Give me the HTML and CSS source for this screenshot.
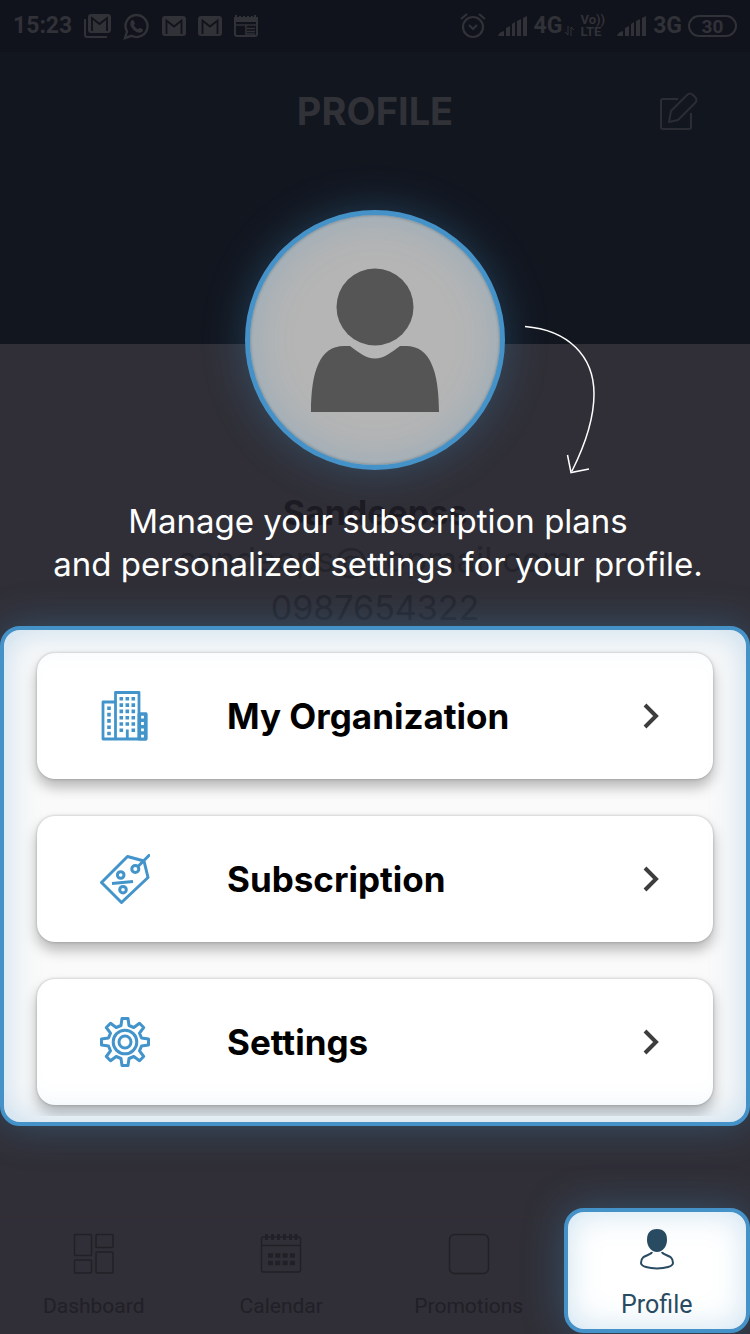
FILE: index.html
```html
<!DOCTYPE html>
<html lang="en">
<head>
<meta charset="utf-8">
<meta name="viewport" content="width=device-width, initial-scale=1">
<title>Profile</title>
<link rel="stylesheet" href="styles.css">
</head>
<body>
<header class="hero">
  <div class="status">
    <div class="status-left">
      <span class="clock">15:23</span>
      <svg width="27" height="24" viewBox="0 0 27 24" fill="none" stroke="currentColor" stroke-width="2"><path d="M1 5v16q0 2 2 2h20"/><rect x="5" y="1" width="21" height="17" rx="2" fill="currentColor"/><path d="M8 17V4l7.500 6L23 4v13" stroke="#10131b" stroke-width="1.800"/></svg>
      <svg width="27" height="27" viewBox="0 0 27 27" fill="none" stroke="currentColor" stroke-width="2.400"><path d="M2 25l2-6.500a11 11 0 1 1 4.500 4.300z"/><path d="M8.500 7.500q1.500-1 2.500.5l1 2.500-1.200 1.700q1.500 2.800 4.200 4l1.800-1.500 3 1.500q.7 3-3 3.500c-5 0-10-6-9.500-9.500q.3-2 1.200-2.700z" fill="currentColor" stroke="none"/></svg>
      <svg width="24" height="20" viewBox="0 0 24 20" fill="none" stroke="currentColor" stroke-width="2"><rect x="1" y="1" width="22" height="18" rx="2" fill="currentColor"/><path d="M4.500 18V4.500l7.500 6 7.500-6V18" stroke="#10131b" stroke-width="1.800"/></svg>
      <svg width="24" height="20" viewBox="0 0 24 20" fill="none" stroke="currentColor" stroke-width="2"><rect x="1" y="1" width="22" height="18" rx="2" fill="currentColor"/><path d="M4.500 18V4.500l7.500 6 7.500-6V18" stroke="#10131b" stroke-width="1.800"/></svg>
      <svg width="24" height="22" viewBox="0 0 24 22" fill="none" stroke="currentColor" stroke-width="2"><path d="M1 3h22v16q0 2-2 2H3q-2 0-2-2z"/><path d="M1 0h2v3h2V1h2v2h2V1h2v2h2V1h2v2h2V1h2v2h1V0h2v7H1z" fill="currentColor" stroke="none"/><path d="M1 10h22M12 10v11M13 13.500h8M13 16.500h8M13 19h8" stroke-width="1.600"/></svg>
    </div>
    <div class="status-right">
      <svg class="alarm" width="26" height="26" viewBox="0 0 26 26" fill="none" stroke="currentColor" stroke-width="2.200"><circle cx="13" cy="14" r="10"/><path d="M1 6l6-5M25 6l-6-5M9 12l4 4 4-4"/></svg>
      <svg width="30" height="22" viewBox="0 0 30 22" fill="currentColor"><path d="M0 21q1-4 6-5v5zM8 13l4-2v10H8zM14 9l3-2v14h-3zM19 6l4-2v17h-4zM25 3l4-2v20h-4z"/></svg>
      <span class="net net-data">4G<svg width="9" height="10" viewBox="0 0 9 10" fill="none" stroke="currentColor"><path d="M3 0v9L0 6M6 10V1l3 3"/></svg></span>
      <span class="volte"><span>Vo))</span><span>LTE</span></span>
      <svg width="30" height="22" viewBox="0 0 30 22" fill="currentColor"><path d="M0 21q1-4 6-5v5zM8 13l4-2v10H8zM14 9l3-2v14h-3zM19 6l4-2v17h-4zM25 3l4-2v20h-4z"/></svg>
      <span class="net">3G</span>
      <span class="battery">30</span>
    </div>
  </div>
  <div class="titlebar">
    <h1 class="title">PROFILE</h1>
    <button class="edit" type="button" aria-label="Edit profile"><svg width="40" height="40" viewBox="0 0 40 40" fill="none" stroke="currentColor" stroke-width="2" stroke-linejoin="round"><path d="M19 8H4q-2 0-2 2v26q0 2 2 2h26q2 0 2-2V22"/><path d="M10 31l2-11L28 4q3-3 6 0l2 2q3 3 0 6L19 29z"/></svg></button>
  </div>
</header>

<main class="main">
  <div class="avatar">
    <svg width="130" height="146" viewBox="310 266 130 146" fill="#555" aria-hidden="true"><circle cx="375" cy="306" r="38.500"/><path d="M311 411C311 370 320 345 344 345h6c8 6 16 12.500 25 12.500S392 351 400 345h6c24 0 33 25 33 66z"/></svg>
  </div>
  <svg class="pointer" width="72" height="150" viewBox="524 325 72 150" fill="none" stroke="#fff" stroke-width="1.500" aria-hidden="true"><path d="M525 326.500C568 330 594 356 594 394c0 26-9 51-22 77M567.500 455l3.500 17.500 18-3.500"/></svg>
  <section class="details">
    <h2 class="name">Sandeepss</h2>
    <p class="contact">sandeeps@yopmail.com</p>
    <p class="contact">0987654322</p>
    <p class="hint">Manage your subscription plans<br>and personalized settings for your profile.</p>
  </section>

  <section class="panel">
    <div class="cards">
      <a class="card" href="#organization">
        <svg class="card-icon" width="50" height="50" viewBox="0 0 50 50" fill="none" stroke="#4294cb" stroke-width="2.800" stroke-linejoin="round"><path d="M15.500 48V1.500h23.500V48M15.500 11H3v37h43V23h-7M27.300 48V38.500"/><path d="M39 23h7v25h-7z" fill="#4294cb"/><path d="M9 15.500V45" stroke-width="3.600" stroke-dasharray="3.600 2.700"/><path d="M21.300 6V41.500M27.300 6V35.500M33.300 6V41.500" stroke-width="3.600" stroke-dasharray="3.600 2.700"/><path d="M42.500 24.800V47" stroke="#fff" stroke-width="2.800" stroke-dasharray="2.800 3.500"/></svg>
        <span class="card-label">My Organization</span>
        <svg width="16" height="26" viewBox="0 0 16 26" fill="none" stroke="#3d3d3d" stroke-width="4"><path d="M2 2l11 11L2 24"/></svg>
      </a>
      <a class="card" href="#subscription">
        <svg class="card-icon" width="50" height="50" viewBox="0 0 50 50" fill="none" stroke="#4294cb" stroke-width="3" stroke-linejoin="round"><path d="M27.500 2.500L44 7l4 16.500-26.500 25L1.500 28.500zM12 29.500l21-2M38 12.500L50 .5"/><circle cx="35.300" cy="15" r="3.500"/><circle cx="20.700" cy="21" r="3.300"/><circle cx="23" cy="35.700" r="3.300"/></svg>
        <span class="card-label">Subscription</span>
        <svg width="16" height="26" viewBox="0 0 16 26" fill="none" stroke="#3d3d3d" stroke-width="4"><path d="M2 2l11 11L2 24"/></svg>
      </a>
      <a class="card" href="#settings">
        <svg class="card-icon" width="50" height="50" viewBox="0 0 50 50" fill="none" stroke="#4294cb" stroke-width="3" stroke-linejoin="round"><path d="M21 8.500L22 1.500H28L29 8.500L33.800 10.500L39.500 6.300L43.700 10.500L39.500 16.200L41.500 21L48.500 22V28L41.500 29L39.500 33.800L43.700 39.500L39.500 43.700L33.800 39.500L29 41.500L28 48.500H22L21 41.500L16.200 39.500L10.500 43.700L6.300 39.500L10.500 33.800L8.500 29L1.500 28V22L8.500 21L10.500 16.200L6.300 10.500L10.500 6.300L16.200 10.500Z"/><circle cx="25" cy="25" r="11.800"/><circle cx="25" cy="25" r="6"/></svg>
        <span class="card-label">Settings</span>
        <svg width="16" height="26" viewBox="0 0 16 26" fill="none" stroke="#3d3d3d" stroke-width="4"><path d="M2 2l11 11L2 24"/></svg>
      </a>
    </div>
  </section>
</main>

<nav class="tabs">
  <a class="tab" href="#dashboard">
    <svg width="42" height="42" viewBox="0 0 42 42" fill="none" stroke="currentColor" stroke-width="1.500"><rect x="1.500" y="1.500" width="17" height="21" rx="1"/><rect x="23" y="1.500" width="17" height="13" rx="1"/><rect x="1.500" y="27" width="17" height="13" rx="1"/><rect x="23" y="19" width="17" height="21" rx="1"/></svg>
    <span>Dashboard</span>
  </a>
  <a class="tab" href="#calendar">
    <svg width="42" height="42" viewBox="0 0 42 42" fill="none" stroke="currentColor" stroke-width="1.500"><rect x="1.500" y="4" width="39" height="35" rx="2"/><path d="M1.500 12.500h39"/><path d="M6.500 1v6M12.500 1v6M18.500 1v6M24.500 1v6M30.500 1v6M36 1v6" stroke-width="3"/><path d="M8 22.500h27M8 30h27" stroke-width="4.600" stroke-dasharray="5 2.300"/></svg>
    <span>Calendar</span>
  </a>
  <a class="tab" href="#promotions">
    <svg width="42" height="42" viewBox="0 0 42 42" fill="none" stroke="currentColor" stroke-width="1.500"><rect x="1.500" y="1.500" width="39" height="39" rx="5"/></svg>
    <span>Promotions</span>
  </a>
  <a class="tab tab-active" href="#profile" aria-current="page">
    <svg width="36" height="42" viewBox="0 0 36 42" fill="none" stroke="#294b62" stroke-width="2"><path d="M18 1c7 0 10 4 10 11 0 6-4 12-10 12S8 18 8 12C8 5 11 1 18 1z" fill="#294b62" stroke="none"/><path d="M13 24c-1 4-11 2-11 11 0 3.500 8 5.500 16 5.500s16-2 16-5.500c0-9-10-7-11-11"/></svg>
    <span>Profile</span>
  </a>
</nav>
</body>
</html>
```
FILE: styles.css
```css
* { box-sizing: border-box; }
body {
  margin: 0;
  min-height: 100vh;
  display: flex;
  flex-direction: column;
  background: #302f37;
  font-family: Inter, "Liberation Sans", sans-serif;
  overflow-x: hidden;
}
h1, h2, p { margin: 0; }
a { color: inherit; text-decoration: none; }
svg { display: block; flex: none; }

.hero { height: 344px; background: #12161f; color: #313138; }
.status {
  height: 52px;
  padding: 0 13px;
  display: flex;
  justify-content: space-between;
  align-items: center;
  background: #10131b;
  font-family: Roboto, sans-serif;
  font-weight: 700;
}
.status-left { display: flex; align-items: center; gap: 12px; }
.status-right { display: flex; align-items: center; gap: 6px; }
.clock, .net { font-size: 23px; line-height: 28px; }
.alarm { margin-right: 6px; }
.net-data { display: flex; align-items: flex-end; gap: 3px; }
.net-data svg { margin-bottom: 4px; }
.volte { display: flex; flex-direction: column; font-size: 13px; line-height: 12px; margin-right: 6px; }
.battery {
  width: 49px;
  height: 22px;
  border: 2px solid;
  border-radius: 11px;
  font-size: 19px;
  line-height: 19px;
  text-align: center;
}
.titlebar {
  display: grid;
  grid-template-columns: 1fr auto 1fr;
  align-items: center;
  height: 118px;
  padding: 0 51px;
}
.title { grid-column: 2; font-size: 38px; line-height: 46px; }
.edit { justify-self: end; padding: 0; border: 0; background: none; color: #2c2c34; }

.main { flex: 1; position: relative; }
.avatar {
  width: 260px;
  height: 260px;
  margin: -134px auto 0;
  display: flex;
  justify-content: center;
  align-items: center;
  border: 5px solid #4592c9;
  border-radius: 50%;
  background: #b5b5b5;
  box-shadow: 0 0 44px rgba(69, 146, 201, .32), inset 0 0 2px 1px #8b959c, inset 0 0 40px rgba(69, 146, 201, .28);
}
.pointer { position: absolute; top: -19px; left: calc(50% + 149px); }

.details { position: relative; height: 156px; padding-top: 20px; text-align: center; }
.name { font-size: 34px; line-height: 46px; color: #1c1b23; }
.contact { font-size: 34px; line-height: 48px; color: #24242c; }
.hint {
  position: absolute;
  top: 30px;
  left: 0;
  right: 0;
  padding-left: 6px;
  font-size: 33px;
  line-height: 43px;
  color: #fff;
}

.panel {
  position: relative;
  padding: 0 0 6px;
  border: 4px solid #4592c9;
  border-radius: 20px;
  background: #fafafa;
  box-shadow: 0 0 40px rgba(69, 146, 201, .35);
}
.panel::after {
  content: "";
  position: absolute;
  inset: 0;
  border-radius: 16px;
  box-shadow: inset 0 0 36px rgba(69, 146, 201, .3);
  pointer-events: none;
}
.cards {
  display: flex;
  flex-direction: column;
  gap: 37px;
  padding: 23px 33px 11px;
  overflow: hidden;
  border-radius: 16px 16px 0 0;
}
.card {
  display: flex;
  align-items: center;
  height: 126px;
  padding: 0 54px 0 63px;
  border-radius: 18px;
  background: #fff;
  box-shadow: 0 0 3px rgba(0, 0, 0, .25), 0 8px 14px rgba(0, 0, 0, .28);
}
.card-label { flex: 1; padding-left: 77px; font-size: 35px; font-weight: 700; line-height: 44px; color: #000; }

.tabs {
  display: grid;
  grid-template-columns: repeat(4, 1fr);
  height: 118px;
  border-top: 1px solid #332f34;
  font-family: Roboto, sans-serif;
  color: #202027;
}
.tab {
  display: flex;
  flex-direction: column;
  align-items: center;
  gap: 18px;
  padding-top: 16px;
  font-size: 21px;
  line-height: 26px;
}
.tab-active {
  position: relative;
  gap: 22px;
  margin: -9px 0 1px 1px;
  border: 4px solid #4592c9;
  border-radius: 20px;
  background: #fff;
  box-shadow: 0 0 40px rgba(69, 146, 201, .35), inset 0 0 32px rgba(69, 146, 201, .28);
  font-size: 25px;
  color: #294b62;
}
```
